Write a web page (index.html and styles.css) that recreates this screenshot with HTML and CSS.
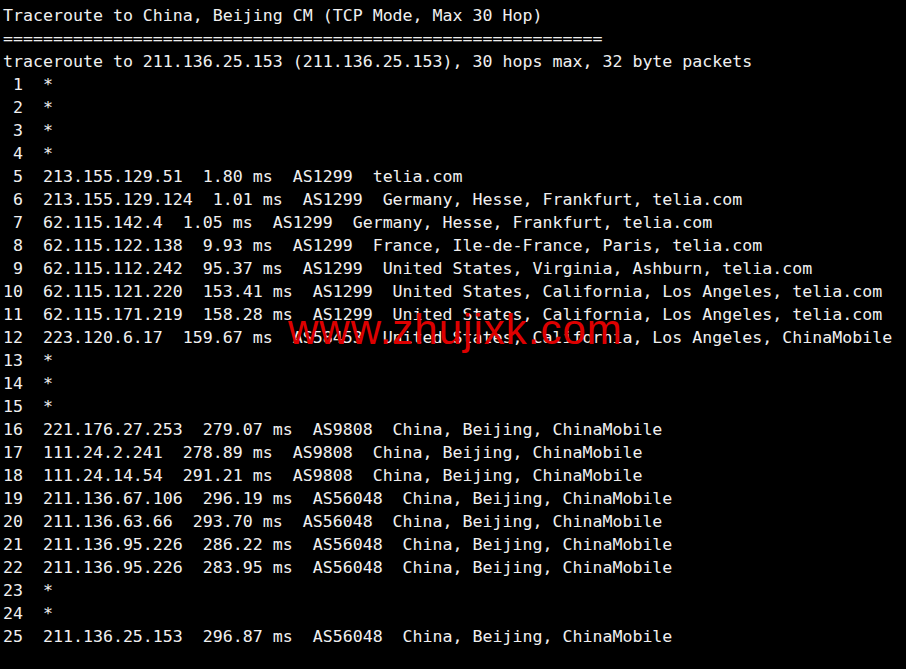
FILE: index.html
```html
<!DOCTYPE html>
<html lang="en">
<head>
<meta charset="utf-8">
<title>Traceroute</title>
<link rel="stylesheet" href="styles.css">
</head>
<body>
<main class="terminal">
<pre class="output">Traceroute to China, Beijing CM (TCP Mode, Max 30 Hop)
============================================================
traceroute to 211.136.25.153 (211.136.25.153), 30 hops max, 32 byte packets
 1  *
 2  *
 3  *
 4  *
 5  213.155.129.51  1.80 ms  AS1299  telia.com
 6  213.155.129.124  1.01 ms  AS1299  Germany, Hesse, Frankfurt, telia.com
 7  62.115.142.4  1.05 ms  AS1299  Germany, Hesse, Frankfurt, telia.com
 8  62.115.122.138  9.93 ms  AS1299  France, Ile-de-France, Paris, telia.com
 9  62.115.112.242  95.37 ms  AS1299  United States, Virginia, Ashburn, telia.com
10  62.115.121.220  153.41 ms  AS1299  United States, California, Los Angeles, telia.com
11  62.115.171.219  158.28 ms  AS1299  United States, California, Los Angeles, telia.com
12  223.120.6.17  159.67 ms  AS58453  United States, California, Los Angeles, ChinaMobile
13  *
14  *
15  *
16  221.176.27.253  279.07 ms  AS9808  China, Beijing, ChinaMobile
17  111.24.2.241  278.89 ms  AS9808  China, Beijing, ChinaMobile
18  111.24.14.54  291.21 ms  AS9808  China, Beijing, ChinaMobile
19  211.136.67.106  296.19 ms  AS56048  China, Beijing, ChinaMobile
20  211.136.63.66  293.70 ms  AS56048  China, Beijing, ChinaMobile
21  211.136.95.226  286.22 ms  AS56048  China, Beijing, ChinaMobile
22  211.136.95.226  283.95 ms  AS56048  China, Beijing, ChinaMobile
23  *
24  *
25  211.136.25.153  296.87 ms  AS56048  China, Beijing, ChinaMobile</pre>
<span class="watermark">www.zhujixk.com</span>
</main>
</body>
</html>
```

FILE: styles.css
```css
html, body {
  margin: 0;
  padding: 0;
  background: #000;
}

.terminal {
  position: relative;
  width: 906px;
  height: 669px;
  background: #000;
  overflow: hidden;
}

.output {
  margin: 0;
  padding: 4px 0 0 3px;
  font-family: "DejaVu Sans Mono", "Liberation Mono", monospace;
  font-size: 16.6px;
  line-height: 23px;
  color: #f0f0f0;
  white-space: pre;
}

.watermark {
  position: absolute;
  left: 288px;
  top: 309px;
  font-family: "Liberation Sans", Arial, sans-serif;
  font-size: 42px;
  line-height: 42px;
  letter-spacing: 1px;
  color: #dd0000;
  white-space: nowrap;
}
```
